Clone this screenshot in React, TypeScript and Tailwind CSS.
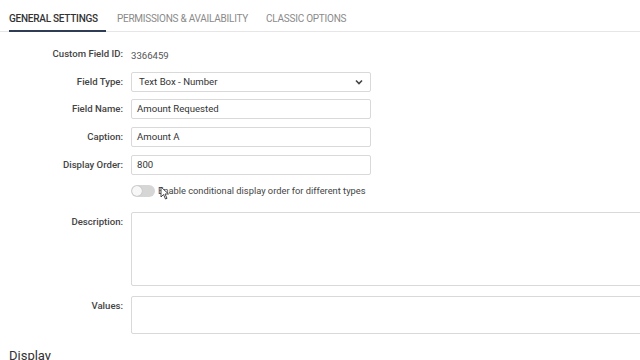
import React from "react";

function Row({ label, children, className = "" }: { label: string; children: React.ReactNode; className?: string }) {
  return (
    <div className={`flex items-center ${className}`}>
      <div className="w-[123px] shrink-0 text-right text-[9.6px] font-medium text-[#444]">{label}</div>
      <div className="ml-[8px] flex-1 min-w-0">{children}</div>
    </div>
  );
}

export default function App() {
  return (
    <div className="relative w-[640px] h-[360px] overflow-hidden bg-white" style={{ fontFamily: "Roboto, 'Liberation Sans', sans-serif" }}>
      <div className="flex border-b border-[#e6e6e6] h-[32px] pl-[9px]">
        <div className="relative flex items-center h-full pt-[5px] pr-[8px] text-[10px] font-medium text-[#333] tracking-tight">
          GENERAL SETTINGS
          <div className="absolute left-0 right-0 bottom-[-1px] h-[2px] bg-[#2e3d55]" />
        </div>
        <div className="flex items-center h-full pt-[5px] ml-[11px] text-[10px] text-[#8a8a8a] tracking-tight">PERMISSIONS &amp; AVAILABILITY</div>
        <div className="flex items-center h-full pt-[5px] ml-[18px] text-[10px] text-[#8a8a8a] tracking-tight">CLASSIC OPTIONS</div>
      </div>

      <div className="pt-[14px]">
        <Row label="Custom Field ID:" className="h-[16px]">
          <span className="text-[9.6px] text-[#555]">3366459</span>
        </Row>

        <Row label="Field Type:" className="mt-[10px]">
          <div className="w-[240px] h-[20px] border border-[#d9d9d9] rounded-[2px] flex items-center justify-between px-[7px] text-[9.6px] text-[#333]">
            <span>Text Box - Number</span>
            <svg width="8" height="6" viewBox="0 0 8 6"><path d="M1 1.5 L4 4.5 L7 1.5" stroke="#444" strokeWidth="1.6" fill="none" /></svg>
          </div>
        </Row>

        <Row label="Field Name:" className="mt-[7px]">
          <div className="w-[240px] h-[20px] border border-[#d9d9d9] rounded-[2px] flex items-center px-[5px] text-[9.6px] text-[#333]">Amount Requested</div>
        </Row>

        <Row label="Caption:" className="mt-[8px]">
          <div className="w-[240px] h-[20px] border border-[#d9d9d9] rounded-[2px] flex items-center px-[5px] text-[9.6px] text-[#333]">Amount A</div>
        </Row>

        <Row label="Display Order:" className="mt-[8px]">
          <div className="w-[240px] h-[20px] border border-[#d9d9d9] rounded-[2px] flex items-center px-[5px] text-[9.6px] text-[#333]">800</div>
        </Row>

        <Row label="" className="mt-[8px] h-[16px]">
          <div className="flex items-center">
            <div className="w-[24px] h-[12px] rounded-full bg-[#d6d6d6] relative">
              <div className="absolute left-[1px] top-[1px] w-[10px] h-[10px] rounded-full bg-[#f7f7f7] shadow-[0_0_1px_rgba(0,0,0,0.3)]" />
            </div>
            <span className="ml-[3px] text-[9.3px] text-[#444]">Enable conditional display order for different types</span>
          </div>
        </Row>

        <div className="flex mt-[13px]">
          <div className="w-[123px] shrink-0 text-right text-[9.6px] font-medium text-[#444] pt-[3px]">Description:</div>
          <div className="ml-[8px] w-[540px] shrink-0 h-[74px] border border-[#d9d9d9] rounded-[2px]" />
        </div>

        <div className="flex mt-[10px]">
          <div className="w-[123px] shrink-0 text-right text-[9.6px] font-medium text-[#444] pt-[3px]">Values:</div>
          <div className="ml-[8px] w-[540px] shrink-0 h-[38px] border border-[#d9d9d9] rounded-[2px]" />
        </div>

        <div className="pl-[9px] mt-[14px] text-[13px] leading-[16px] text-[#333]">Display</div>
      </div>

      <svg className="absolute left-[160px] top-[186px]" width="10" height="14" viewBox="0 0 10 14">
        <path d="M1 1 L1 11 L3.5 8.5 L5.5 13 L7 12.3 L5 8 L8.5 8 Z" fill="#fff" stroke="#333" strokeWidth="0.9" />
      </svg>
    </div>
  );
}
